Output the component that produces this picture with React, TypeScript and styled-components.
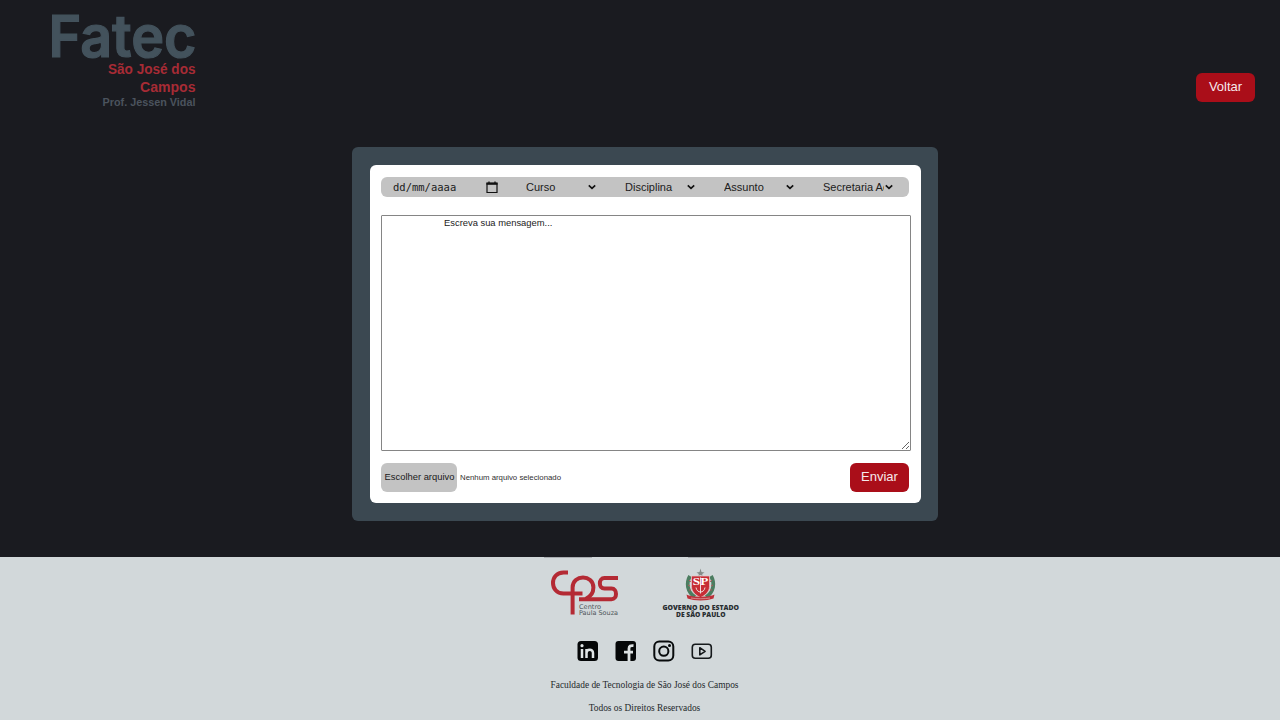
import React from 'react';
import styled, { createGlobalStyle } from 'styled-components';

const GlobalStyle = createGlobalStyle`
  * { box-sizing: border-box; }
  body { margin: 0; background: #1a1b20; font-family: "Liberation Sans", Arial, sans-serif; }
`;

const Page = styled.div`
  width: 100%;
  height: 720px;
  display: flex;
  flex-direction: column;
  overflow: hidden;
`;

const Header = styled.header`
  height: 147px;
  flex: none;
  display: flex;
  justify-content: space-between;
  align-items: flex-start;
  padding: 0 25px 0 40px;
`;

const RedButton = styled.button<{ $top?: number }>`
  width: 59px;
  height: 29px;
  margin: ${(p) => p.$top ?? 0}px 0 0;
  padding: 0 0 2px;
  border: 0;
  border-radius: 6px;
  background: #aa0e19;
  color: #f6e9ec;
  font: 13px "Liberation Sans", Arial, sans-serif;
`;

const Main = styled.main`
  height: 410px;
  flex: none;
  padding-left: 352px;
`;

const Frame = styled.section`
  width: 586px;
  height: 374px;
  padding: 18px 17px 18px 18px;
  border-radius: 6px;
  background: #3b4851;
`;

const Form = styled.form`
  height: 338px;
  padding: 12px 10px 0 11px;
  border-radius: 6px;
  background: #fff;
`;

const Filters = styled.div`
  display: flex;
  width: 528px;
  height: 20px;
  border-radius: 6px;
  background: #c3c3c3;
  color: #202020;
  padding-left: 12px;
`;

const DateField = styled.div`
  flex: none;
  width: 133px;
  display: flex;
  align-items: center;
  font: 10.5px "DejaVu Sans Mono", monospace;
  svg { margin-left: 30px; }
`;

const Choice = styled.div`
  flex: none;
  width: 99px;
  display: flex;
  align-items: center;
  font-size: 11px;
  &:last-child { width: 83px; }
  svg { flex: none; }
`;

const ChoiceLabel = styled.span`
  width: 61px;
  overflow: hidden;
  white-space: nowrap;
`;

const Message = styled.textarea`
  display: block;
  width: 530px;
  height: 236px;
  margin: 18px 0 12px;
  padding: 0 62px;
  border: 1px solid #858585;
  border-radius: 1px;
  background: #fff;
  font: 9.4px/13px "Liberation Sans", Arial, sans-serif;
  &::placeholder { color: #222; opacity: 1; }
`;

const Actions = styled.div`
  display: flex;
  align-items: center;
  width: 528px;
`;

const FileButton = styled.button`
  width: 76px;
  height: 29px;
  padding: 0 0 2px 1px;
  border: 0;
  border-radius: 6px;
  background: #c3c3c3;
  color: #202020;
  white-space: nowrap;
  font: 9.4px "Liberation Sans", Arial, sans-serif;
`;

const FileName = styled.span`
  flex: 1;
  padding: 0 0 0 3px;
  color: #303030;
  font-size: 7.8px;
`;

const Footer = styled.footer`
  height: 163px;
  flex: none;
  display: flex;
  flex-direction: column;
  align-items: center;
  padding-left: 9px;
  background: #d2d8da;
  color: #24282b;
  font: 9.4px/12px "Liberation Serif", "Times New Roman", serif;
`;

const Partners = styled.div`
  display: flex;
  height: 74px;
  width: 202px;
  gap: 39px;
`;

const Social = styled.nav`
  display: flex;
  gap: 14px;
  margin: 8px 0 16px;
  svg { display: block; }
`;

const Credit = styled.p`
  margin: 0 0 11px;
`;

const FatecLogo = () => (
  <svg width="170" height="120" viewBox="40 0 170 120" fontFamily="Inter, sans-serif" fontWeight="600">
    <g fill="#43525c" stroke="#43525c" strokeWidth="1.2">
      <text x="48.500" y="57" fontSize="58" textLength="148" lengthAdjust="spacingAndGlyphs">Fatec</text>
    </g>
    <g fill="#a72b35" fontSize="14.300" fontFamily="'Liberation Sans', sans-serif">
      <text x="108" y="74" textLength="87.500" lengthAdjust="spacingAndGlyphs">São José dos</text>
      <text x="140" y="92" textLength="55.500" lengthAdjust="spacingAndGlyphs">Campos</text>
    </g>
    <text x="102.500" y="106" fontFamily="'Liberation Sans', sans-serif" fontSize="11" fill="#4b535d" textLength="93" lengthAdjust="spacingAndGlyphs">Prof. Jessen Vidal</text>
  </svg>
);

const CalendarIcon = () => (
  <svg width="12" height="13" viewBox="0 0 12 13" fill="none" stroke="#111">
    <path d="M1 2h10v9.5H1z" strokeWidth="1.2" />
    <path d="M.5 2.8h11" strokeWidth="2" />
    <path d="M3 .5v2M9 .5v2" strokeWidth="1.3" />
  </svg>
);

const Chevron = () => (
  <svg width="10" height="8" viewBox="0 0 10 8" fill="none" stroke="#111" strokeWidth="1.7">
    <path d="M1.8 2.3 5 5.3l3.2-3" />
  </svg>
);

const CpsLogo = () => (
  <svg width="76" height="74" viewBox="544 557 76 74">
    <path d="M544 557.500h48" stroke="#a9adb1" />
    <g fill="none" stroke="#b42a34" strokeWidth="4">
      <path d="M568 572.500h-4.500c-14 0-14 21 0 21H582.500" />
      <path d="M572.600 614.500V587.500C572.600 574.300 593.400 574.300 593.400 587.500 593.400 593 590 597 585.500 599" />
      <path d="M579 599.200h32.500c6 0 6-10.600 0-10.600h-7c-6.200 0-6.200-10.600 0-10.600H618" />
    </g>
    <g fill="#4e5559" fontFamily="'DejaVu Sans', sans-serif" fontSize="6.500">
      <text x="579" y="608.500" textLength="22" lengthAdjust="spacingAndGlyphs">Centro</text>
      <text x="579" y="614.500" textLength="39" lengthAdjust="spacingAndGlyphs">Paula Souza</text>
    </g>
  </svg>
);

const StateLogo = () => (
  <svg width="84" height="74" viewBox="659 557 84 74">
    <path d="M688 557.500h32" stroke="#a9adb1" />
    <path d="M690 576c-4 7-3 16 5 21M711 576c4 7 3 16-5 21" fill="none" stroke="#4c7d60" strokeWidth="3.800" />
    <path d="M689 580l2 2m-3 3 2 1m-1 4 2 0M712 580l-2 2m3 3-2 1m1 4h-2" stroke="#c0525a" strokeWidth=".9" />
    <path d="m700.500 568.500 1 3.500 3 .5-2.300 1.500.4 2-2.100-1-2.100 1 .4-2-2.300-1.500 3-.5z" fill="#858c89" />
    <path d="M691.500 576h18v10.500c0 5.500-4.500 9-9 11-4.500-2-9-5.500-9-11z" fill="#c72d36" stroke="#e8c9c9" strokeWidth=".7" />
    <path d="M700.500 577.500v16m-4.500-6c1 6 8 6 9 0" stroke="#f1dedd" fill="none" />
    <text x="692.800" y="584.800" fill="#fff" fontFamily="'Liberation Serif', serif" fontWeight="700" fontSize="10.500" textLength="15.500" lengthAdjust="spacingAndGlyphs">SP</text>
    <path d="M686.500 594.500c5 3 23 3 28 0l-1 4c-7 2.500-19 2.500-26 0z" fill="#be3039" />
    <path d="M691 598c6 1 13 1 19 0" stroke="#dfadb0" strokeWidth=".7" fill="none" />
    <g fill="#292e31" fontFamily="'Open Sans', sans-serif" fontWeight="800" fontSize="6.600">
      <text x="662.500" y="609.500" textLength="76.500" lengthAdjust="spacingAndGlyphs">GOVERNO DO ESTADO</text>
      <text x="676" y="617" textLength="49.500" lengthAdjust="spacingAndGlyphs">DE SÃO PAULO</text>
    </g>
  </svg>
);

const SocialIcons = () => (
  <Social>
    <svg width="24" height="24" viewBox="0 0 24 24">
      <rect x="1.500" y="2" width="20.500" height="20" rx="3.500" fill="#050708" />
      <path d="M6 10v9M10.500 19v-9M10.500 14c0-4 6.500-4.500 6.500 0v5" fill="none" stroke="#e1e6e7" strokeWidth="2.500" />
      <circle cx="6" cy="6.700" r="1.600" fill="#e1e6e7" />
    </svg>
    <svg width="24" height="24" viewBox="0 0 24 24">
      <rect x="1.500" y="2" width="20.500" height="20" rx="3" fill="#050708" />
      <path d="M15 22.500v-13c0-2.500 1.500-3.200 4.500-2.900M10 13.200h9" fill="none" stroke="#dce1e2" strokeWidth="2.800" />
    </svg>
    <svg width="24" height="24" viewBox="0 0 24 24" fill="none" stroke="#080b0c" strokeWidth="2">
      <rect x="2.300" y="2.600" width="19" height="19" rx="5" />
      <circle cx="11.800" cy="12.200" r="4.600" />
      <circle cx="17.500" cy="6.600" r="1.500" fill="#080b0c" stroke="none" />
    </svg>
    <svg width="24" height="24" viewBox="0 0 24 24" fill="none" stroke="#15191b" strokeWidth="1.600">
      <rect x="2.300" y="5.300" width="19" height="14" rx="3" />
      <path d="m9.800 8.700 5.300 3.600-5.300 3.600z" strokeLinejoin="round" />
    </svg>
  </Social>
);

const choices = ['Curso', 'Disciplina', 'Assunto', 'Secretaria Acadêmica'];

export default function App() {
  return (
    <Page>
      <GlobalStyle />
      <Header>
        <FatecLogo />
        <RedButton $top={73}>Voltar</RedButton>
      </Header>
      <Main>
        <Frame>
          <Form>
            <Filters>
              <DateField>dd/mm/aaaa<CalendarIcon /></DateField>
              {choices.map((label) => (
                <Choice key={label}>
                  <ChoiceLabel>{label}</ChoiceLabel>
                  <Chevron />
                </Choice>
              ))}
            </Filters>
            <Message placeholder="Escreva sua mensagem..." />
            <Actions>
              <FileButton type="button">Escolher arquivo</FileButton>
              <FileName>Nenhum arquivo selecionado</FileName>
              <RedButton type="button">Enviar</RedButton>
            </Actions>
          </Form>
        </Frame>
      </Main>
      <Footer>
        <Partners>
          <CpsLogo />
          <StateLogo />
        </Partners>
        <SocialIcons />
        <Credit>Faculdade de Tecnologia de São José dos Campos</Credit>
        <Credit>Todos os Direitos Reservados</Credit>
      </Footer>
    </Page>
  );
}
